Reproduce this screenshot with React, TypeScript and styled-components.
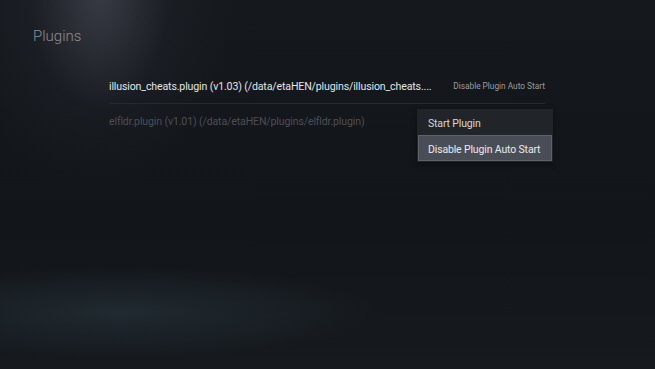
import styled, {createGlobalStyle} from 'styled-components';

const GlobalStyle = createGlobalStyle`
  html, body {
    margin: 0;
    padding: 0;
    background: #14171c;
  }

  body {
    font-family: Roboto, "Open Sans", sans-serif;
  }
`;

interface Plugin {
  name: string;
  version: string;
  path: string;
  action?: string;
  dimmed?: boolean;
}

const plugins: Plugin[] = [
  {
    name: 'illusion_cheats.plugin',
    version: 'v1.03',
    path: '/data/etaHEN/plugins/illusion_cheats....',
    action: 'Disable Plugin Auto Start',
  },
  {
    name: 'elfldr.plugin',
    version: 'v1.01',
    path: '/data/etaHEN/plugins/elfldr.plugin)',
    dimmed: true,
  },
];

const menuItems = ['Start Plugin', 'Disable Plugin Auto Start'];

export default function App() {
  return (
    <>
      <GlobalStyle />
      <Screen>
        <Title>Plugins</Title>
        <List>
          {plugins.map((p, i) => (
            <Row key={p.name} $last={i === plugins.length - 1}>
              <RowLabel $dimmed={p.dimmed}>
                {`${p.name} (${p.version}) (${p.path}`}
              </RowLabel>
              {p.action && <RowAction>{p.action}</RowAction>}
              {p.dimmed && (
                <Menu>
                  {menuItems.map((item, idx) => (
                    <MenuItem key={item} $active={idx === 1}>
                      {item}
                    </MenuItem>
                  ))}
                </Menu>
              )}
            </Row>
          ))}
        </List>
      </Screen>
    </>
  );
}

const Screen = styled.div`
  position: relative;
  width: 655px;
  height: 369px;
  overflow: hidden;
  box-sizing: border-box;
  padding-top: 26px;
  background:
    radial-gradient(ellipse 70px 115px at 100px -5px, rgba(78, 82, 92, 0.5), rgba(78, 82, 92, 0) 100%),
    radial-gradient(ellipse 140px 190px at 95px 0px, rgba(40, 43, 50, 0.55), rgba(40, 43, 50, 0) 100%),
    radial-gradient(ellipse 260px 45px at 120px 312px, rgba(40, 54, 60, 0.6), rgba(40, 54, 60, 0) 100%),
    linear-gradient(180deg, #15181d 0%, #12151a 60%, #161a1f 100%);
`;

const Title = styled.h1`
  margin: 0 0 0 33px;
  font-size: 15px;
  line-height: 20px;
  font-weight: 300;
  color: #8c8f95;
`;

const List = styled.div`
  margin: 23px 0 0 109px;
  width: 436px;
`;

const Row = styled.div<{$last?: boolean}>`
  position: relative;
  display: flex;
  align-items: center;
  justify-content: space-between;
  height: 34px;
  border-bottom: 1px solid ${(p) => (p.$last ? 'transparent' : '#262a30')};
`;

const RowLabel = styled.span<{$dimmed?: boolean}>`
  font-size: 10.6px;
  letter-spacing: -0.15px;
  white-space: nowrap;
  color: ${(p) => (p.$dimmed ? '#4b4f55' : '#e4e5e7')};
`;

const RowAction = styled.span`
  font-size: 8.3px;
  color: #9a9da2;
  white-space: nowrap;
`;

const Menu = styled.div`
  position: absolute;
  top: 5px;
  right: -8px;
  width: 136px;
  padding: 0 1px 1px;
  box-sizing: border-box;
  background: #21252a;
  box-shadow: 0 2px 6px rgba(0, 0, 0, 0.35);
`;

const MenuItem = styled.div<{$active?: boolean}>`
  display: flex;
  align-items: center;
  height: 26px;
  padding: 2px 0 0 9px;
  box-sizing: border-box;
  font-size: 10.5px;
  letter-spacing: -0.15px;
  white-space: nowrap;
  color: ${(p) => (p.$active ? '#e9eaec' : '#d6d7d9')};
  background: ${(p) => (p.$active ? '#494e56' : 'transparent')};
  border: 1px solid ${(p) => (p.$active ? '#5e636b' : 'transparent')};
`;
